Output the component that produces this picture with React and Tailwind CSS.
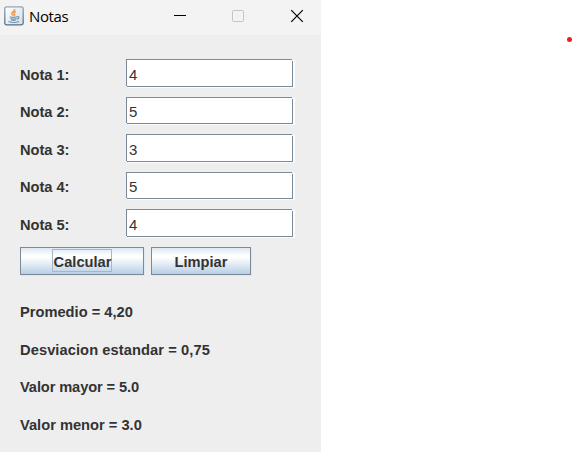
const fields = [
  { label: 'Nota 1:', value: '4', row: 'h-[38px]', box: 'h-[28px] leading-[30px]', line: 'leading-[32px]' },
  { label: 'Nota 2:', value: '5', row: 'h-[37px]', box: 'h-[27px] leading-[28px]', line: 'leading-[30px]' },
  { label: 'Nota 3:', value: '3', row: 'h-[38px]', box: 'h-[28px] leading-[30px]', line: 'leading-[32px]' },
  { label: 'Nota 4:', value: '5', row: 'h-[37px]', box: 'h-[27px] leading-[28px]', line: 'leading-[30px]' },
  { label: 'Nota 5:', value: '4', row: 'h-[38px]', box: 'h-[28px] leading-[30px]', line: 'leading-[32px]' },
];

const results = [
  { text: 'Promedio = 4,20', row: 'h-[38px]' },
  { text: 'Desviacion estandar = 0,75', row: 'h-[37px] tracking-[0.08px]' },
  { text: 'Valor mayor = 5.0', row: 'h-[38px] tracking-[-0.12px]' },
  { text: 'Valor menor = 3.0', row: 'h-[37px]' },
];

function JavaIcon() {
  return (
    <svg width="20" height="20" viewBox="0 0 20 20" className="block">
      <defs>
        <linearGradient id="frame" x1="0" y1="0" x2="0" y2="1">
          <stop offset="0" stopColor="#91a7b8" />
          <stop offset="1" stopColor="#4f7188" />
        </linearGradient>
        <linearGradient id="face" x1="0" y1="0" x2="1" y2="1">
          <stop offset="0" stopColor="#ffffff" />
          <stop offset="1" stopColor="#d5dde3" />
        </linearGradient>
      </defs>
      <rect x="0.8" y="0.8" width="18.4" height="18" rx="1.8" fill="url(#face)" stroke="url(#frame)" strokeWidth="1.3" />
      <path d="M10.5 3.2c1 2-3.3 2.8-2.6 4.5.2.8 1.2 1.3 1.3 2M12 5.5c-2.6 1.3-2 2.1-1.4 3 .4.7-.2 1-.6 1.3" fill="none" stroke="#ee9d58" strokeWidth="1.6" />
      <path d="M5.7 10.7c1.5.6 5.5.6 7.2 0M6.3 12.4c1.6.7 4.5.7 6.2 0M7 13.9c1.3.5 3.4.5 4.8 0M13 10.8c2.8-.8 2.3 2-.3 2.4M4.3 15.4c2.8 1.1 8 1.1 10.7 0" fill="none" stroke="#6f95b0" strokeWidth="1.1" />
    </svg>
  );
}

function Field({ value, box }) {
  return (
    <div className={`relative w-[167px] border border-[#7a8a99] bg-white pl-[2px] text-[15px] shadow-[2px_1px_0_0_#fafcfd] ${box}`}>
      {value}
      <span className="absolute -bottom-px -left-px size-px bg-[#eeeeee]" />
      <span className="absolute -top-px -right-px h-[2px] w-px bg-[#e8f0f7]" />
    </div>
  );
}

function Button({ children, className }) {
  return (
    <button className={`flex h-[28px] justify-center border border-[#7a8a99] bg-[linear-gradient(to_bottom,#dde8f3_0%,#ffffff_30%,#ffffff_36%,#b8cfe5_100%)] text-[14.67px] font-bold shadow-[1px_1px_0_0_#dce7f1] ${className}`}>
      {children}
    </button>
  );
}

export default function App() {
  return (
    <div className="relative h-[452px] w-[573px] overflow-hidden bg-white">
      <div className="flex h-full w-[321px] flex-col bg-[#eeeeee] font-['Liberation_Sans',Arial,sans-serif] text-[15px] text-[#333333]">
        <header className="flex h-[35px] shrink-0 items-start bg-[#f3f3f3] pl-[4px] text-black">
          <div className="pt-[6px]"><JavaIcon /></div>
          <span className="mt-[4px] ml-[5px] w-[40px] font-['Open_Sans','Noto_Sans',sans-serif] text-[15px] leading-[24px] tracking-[-0.4px]">Notas</span>
          <svg width="130" height="14" className="mt-[9px] ml-[105px] block" fill="none">
            <path d="M0 6.5h12" stroke="#000" />
            <rect x="58.5" y="1.5" width="11" height="11" rx="1" stroke="#c5c5c5" />
            <path d="M117.2 1.2l11.6 11.6M128.8 1.2L117.2 12.8" stroke="#000" strokeWidth="1.2" />
          </svg>
        </header>
        <main className="pt-[24px] pl-[20px]">
          {fields.map((f) => (
            <div key={f.label} className={`flex items-start ${f.row}`}>
              <label className={`w-[106px] text-[14.67px] font-bold tracking-[-0.05px] ${f.line}`}>{f.label}</label>
              <Field value={f.value} box={f.box} />
            </div>
          ))}
          <div className="flex gap-[7px]">
            <Button className="w-[124px]">
              <span className="mt-px mr-px flex h-[23px] w-[60px] justify-center border border-[#a3b8cc] pl-[2px] leading-[24px]">Calcular</span>
            </Button>
            <Button className="w-[100px]"><span className="leading-[28px]">Limpiar</span></Button>
          </div>
          <div className="pt-[21px] text-[14.67px] font-bold">
            {results.map((r) => (
              <div key={r.text} className={`leading-[32px] whitespace-nowrap ${r.row}`}>{r.text}</div>
            ))}
          </div>
        </main>
      </div>
      <span className="absolute top-[37px] left-[567px] size-[5px] rounded-full bg-[#ed1c24]" />
    </div>
  );
}
